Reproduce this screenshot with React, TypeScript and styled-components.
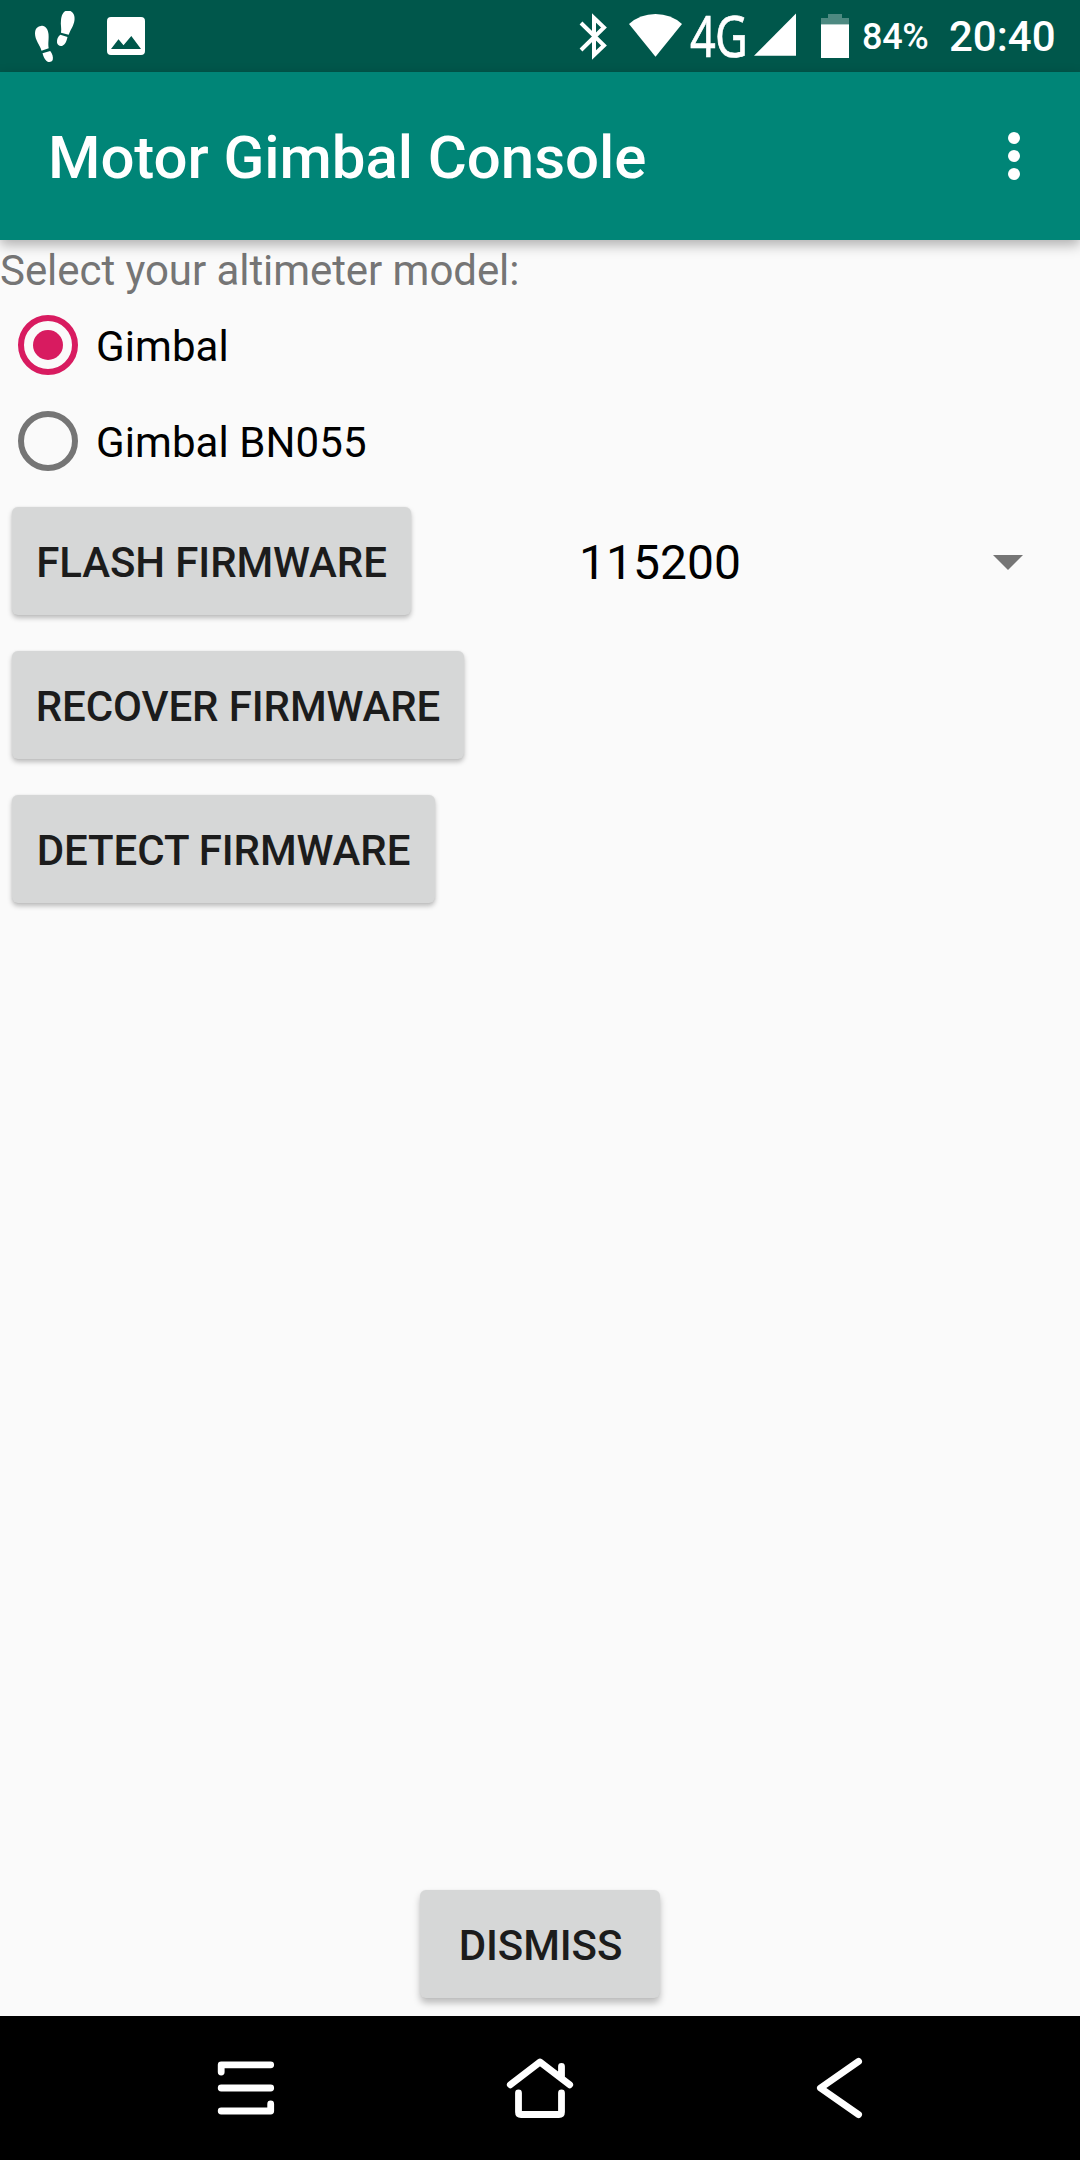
import React, { useState } from 'react';
import styled, { createGlobalStyle } from 'styled-components';

const GlobalStyle = createGlobalStyle`
  *, *::before, *::after { box-sizing: border-box; }
  body {
    margin: 0;
    background: #fafafa;
    font-family: Roboto, "Noto Sans", sans-serif;
  }
`;

const Screen = styled.div`
  width: 1080px;
  height: 2160px;
  display: flex;
  flex-direction: column;
  overflow: hidden;
  background: #fafafa;
`;

const StatusBar = styled.header`
  flex: none;
  height: 72px;
  display: flex;
  align-items: center;
  justify-content: space-between;
  padding: 0 25px 0 34px;
  background: #00574b;
  color: #fff;
`;

const StatusGroup = styled.div`
  height: 72px;
  display: flex;
  align-items: center;
`;

const Glyph = styled.svg<{ $before?: number }>`
  display: block;
  flex: none;
  margin-left: ${(p) => p.$before ?? 0}px;
`;

const Network = styled.span`
  flex: none;
  width: 76px;
  margin: 0 -20px 0 8px;
  font: 400 57px/72px "Noto Sans", sans-serif;
  letter-spacing: -1px;
  white-space: nowrap;
  -webkit-text-stroke: 0.7px #fff;
  transform: translateY(-1px) scaleX(0.79);
  transform-origin: 0 50%;
`;

const BatteryLevel = styled.span`
  width: 68px;
  margin-left: 13px;
  font-size: 36px;
  font-weight: 500;
  letter-spacing: -0.3px;
  line-height: 72px;
  padding-top: 2px;
`;

const Clock = styled.span`
  width: 106px;
  margin-left: 19px;
  font-size: 42px;
  font-weight: 500;
  line-height: 72px;
  padding-top: 2px;
`;

const AppBar = styled.div`
  flex: none;
  z-index: 1;
  height: 168px;
  display: flex;
  align-items: center;
  justify-content: space-between;
  padding: 0 60px 0 48px;
  background: #008577;
  box-shadow: 0 5px 12px rgba(0, 0, 0, 0.3);
`;

const Title = styled.h1`
  margin: 4px 0 0;
  color: #fff;
  font-size: 60px;
  font-weight: 500;
  letter-spacing: -0.07px;
  line-height: 70px;
`;

const MenuButton = styled.button`
  display: flex;
  flex-direction: column;
  gap: 6px;
  padding: 0;
  border: 0;
  background: none;
`;

const Dot = styled.span`
  width: 12px;
  height: 12px;
  border-radius: 50%;
  background: #fff;
`;

const Content = styled.main`
  flex: 1;
  display: flex;
  flex-direction: column;
`;

const Prompt = styled.p`
  margin: 0;
  height: 57px;
  color: #757575;
  font-size: 42px;
  letter-spacing: -0.06px;
  line-height: 62px;
`;

const RadioRow = styled.label`
  height: 96px;
  display: flex;
  align-items: center;
  gap: 18px;
  padding-left: 18px;
  color: #000;
  font-size: 42px;
  line-height: 50px;
`;

const RadioMark = styled.span<{ $checked: boolean }>`
  width: 60px;
  height: 60px;
  display: flex;
  align-items: center;
  justify-content: center;
  border: 6px solid ${(p) => (p.$checked ? '#d81b60' : '#757575')};
  border-radius: 50%;

  &::after {
    content: '';
    width: 30px;
    height: 30px;
    border-radius: 50%;
    background: ${(p) => (p.$checked ? '#d81b60' : 'transparent')};
  }
`;

const HiddenRadio = styled.input`
  display: none;
`;

const RadioLabel = styled.span`
  padding-top: 4px;
  letter-spacing: 0.08px;
`;

const ActionRow = styled.div`
  height: 144px;
  display: flex;
  align-items: center;
  padding-left: 12px;
`;

const Button = styled.button<{ $width: number; $raised?: boolean }>`
  width: ${(p) => p.$width}px;
  height: 108px;
  padding: 4px 0 0 ${(p) => (p.$raised ? 1 : 0)}px;
  border: 0;
  border-radius: 6px;
  background: #d6d7d7;
  color: #1c1c1c;
  font-family: inherit;
  font-size: 42px;
  font-weight: 500;
  letter-spacing: -0.1px;
  line-height: 50px;
  text-transform: uppercase;
  white-space: nowrap;
  box-shadow: ${(p) =>
    p.$raised
      ? '0 5px 7px rgba(0, 0, 0, 0.25), 0 0 2px rgba(0, 0, 0, 0.05)'
      : '0 3px 5px rgba(0, 0, 0, 0.25), 0 0 2px rgba(0, 0, 0, 0.07)'};
`;

const Spinner = styled.div`
  flex: 1;
  display: flex;
  align-items: center;
  justify-content: space-between;
  margin-left: 168px;
  padding: 2px 57px 0 0;
  color: #000;
  font-size: 48px;
  line-height: 56px;
`;

const SpinnerValue = styled.span`
  padding-top: 2px;
`;

const Footer = styled.div`
  margin-top: auto;
  padding-bottom: 18px;
  display: flex;
  justify-content: center;
`;

const NavBar = styled.nav`
  flex: none;
  z-index: 1;
  height: 144px;
  display: flex;
  align-items: center;
  justify-content: space-between;
  padding: 0 210px;
  background: #000;
`;

const NavIcon = styled.svg`
  display: block;
  width: 72px;
  height: 72px;
  fill: none;
  stroke: #fff;
  stroke-width: 6.8;
  stroke-linecap: round;
  stroke-linejoin: round;
`;

const models = ['Gimbal', 'Gimbal BN055'];

export default function App() {
  const [model, setModel] = useState(models[0]);

  return (
    <Screen>
      <GlobalStyle />
      <StatusBar>
        <StatusGroup>
          <Glyph width="42" height="72" viewBox="34 0 42 72" fill="#fff">
            <path d="M41 26C45 25 48 29 48.5 34C49 40 47.8 43 48.7 48.3L41.5 50.7C40 45 35 40 35 33.500C35 29 37 26.500 41 26Z" />
            <path d="M42.500 53.300L50.200 51C52.200 53.500 53.500 57 52.700 60C51.800 62.300 48 62.500 46.300 60.700C44 58.500 43.500 56.500 42.500 53.300Z" />
            <path d="M65.500 11H70.500C73.500 12.500 75 16 74.500 20C73.800 26 70.500 29.500 68.700 34.800L61 32.700C61.800 28 60.300 25 61 20C61.600 15 63 12.500 65.500 11Z" />
            <path d="M60.300 34.800L67.500 37C66.500 41 65.500 44.500 62 45.900C59.500 46.500 57.500 45 57 42.500C56.700 39.500 58 36.500 60.300 34.800Z" />
          </Glyph>
          <Glyph $before={31} width="38" height="72" viewBox="107 0 38 72" fill="#fff">
            <path
              fillRule="evenodd"
              d="M111 17H141Q145 17 145 21V51Q145 55 141 55H111Q107 55 107 51V21Q107 17 111 17ZM111 49H141L131.300 36L123.500 45.300L118.500 39.200Z"
            />
          </Glyph>
        </StatusGroup>
        <StatusGroup>
          <Glyph width="28" height="72" viewBox="579 0 28 72" fill="none" stroke="#fff" strokeWidth="4">
            <path d="M581 23L604 45.500L594 55V18L604 27.500L581 50" />
          </Glyph>
          <Glyph $before={22} width="53" height="72" viewBox="629 0 53 72" fill="#fff">
            <path d="M629 24Q640 14 655.500 14T682 24L655.500 56.800Z" />
          </Glyph>
          <Network>4G</Network>
          <Glyph $before={8} width="42" height="72" viewBox="754 0 42 72" fill="#fff">
            <path d="M754 55.700L796 13.500V55.700Z" />
          </Glyph>
          <Glyph $before={25} width="28" height="72" viewBox="821 0 28 72" fill="#fff">
            <path opacity=".3" d="M828 14H842V18H849V24.300H821V18H828Z" />
            <path d="M821 24.300H849V58H821Z" />
          </Glyph>
          <BatteryLevel>84%</BatteryLevel>
          <Clock>20:40</Clock>
        </StatusGroup>
      </StatusBar>

      <AppBar>
        <Title>Motor Gimbal Console</Title>
        <MenuButton aria-label="More options">
          <Dot />
          <Dot />
          <Dot />
        </MenuButton>
      </AppBar>

      <Content>
        <Prompt>Select your altimeter model:</Prompt>
        {models.map((name) => (
          <RadioRow key={name}>
            <HiddenRadio
              type="radio"
              name="model"
              checked={model === name}
              onChange={() => setModel(name)}
            />
            <RadioMark $checked={model === name} />
            <RadioLabel>{name}</RadioLabel>
          </RadioRow>
        ))}
        <ActionRow>
          <Button $width={399}>Flash Firmware</Button>
          <Spinner>
            <SpinnerValue>115200</SpinnerValue>
            <Glyph width="30" height="15" viewBox="0 0 30 15" fill="#757575">
              <path d="M0 0H30L15 15Z" />
            </Glyph>
          </Spinner>
        </ActionRow>
        <ActionRow>
          <Button $width={452}>Recover Firmware</Button>
        </ActionRow>
        <ActionRow>
          <Button $width={423}>Detect Firmware</Button>
        </ActionRow>
        <Footer>
          <Button $width={240} $raised>
            Dismiss
          </Button>
        </Footer>
      </Content>

      <NavBar>
        <NavIcon viewBox="0 0 72 72">
          <path d="M11.200 20V12.800H60.700M11.200 36H60.700M11.200 59H60.700V52" />
        </NavIcon>
        <NavIcon viewBox="0 0 72 72">
          <path d="M6.300 32.800L36 10L65.700 32.800M57.500 14.500V26M14.500 41V60Q14.500 62.500 17 62.500H55Q57.500 62.500 57.500 60V41" />
        </NavIcon>
        <NavIcon viewBox="0 0 72 72">
          <path d="M60.600 9.400L22.400 36L60.600 62.600" />
        </NavIcon>
      </NavBar>
    </Screen>
  );
}
